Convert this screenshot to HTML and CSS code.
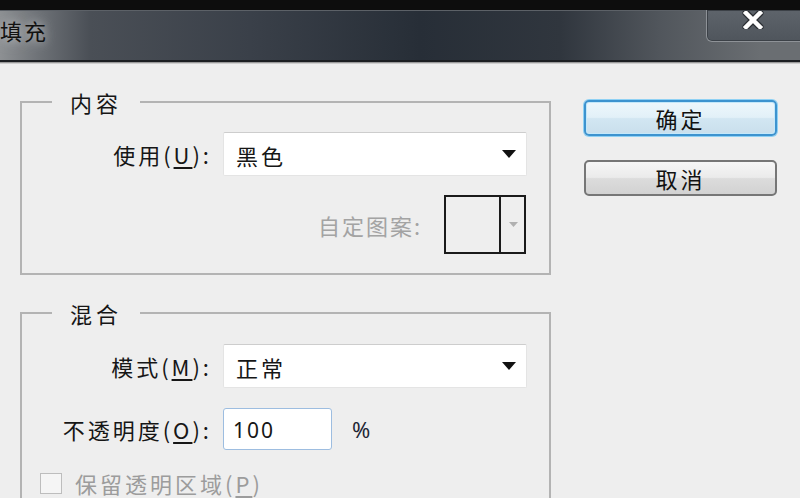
FILE: index.html
```html
<!DOCTYPE html>
<html lang="zh-CN">
<head>
  <meta charset="UTF-8">
  <title>填充</title>
  <link rel="stylesheet" href="styles.css">
</head>
<body>
  <div class="window">
    <div class="topbar"></div>

    <div class="titlebar">
      <span class="title">填充</span>
      <button class="close-btn" type="button" aria-label="关闭">
        <svg width="22" height="18" viewBox="0 0 22 18">
          <path d="M4 2 L18 16 M18 2 L4 16" stroke="#2a2e33" stroke-width="7" stroke-linecap="round"/>
          <path d="M4 2 L18 16 M18 2 L4 16" stroke="#ffffff" stroke-width="4.5" stroke-linecap="square"/>
        </svg>
      </button>
    </div>

    <div class="dialog">
      <div class="groups">
        <fieldset class="group group-content">
          <legend>内容</legend>
          <div class="row">
            <label class="field-label">使用(<u>U</u>):</label>
            <div class="select">
              <span class="select-value">黑色</span>
              <svg class="caret" width="14" height="8" viewBox="0 0 14 8"><path d="M0 0 H14 L7 8 Z" fill="#111"/></svg>
            </div>
          </div>
          <div class="row row-pattern">
            <span class="pattern-label">自定图案:</span>
            <div class="pattern-picker">
              <div class="pattern-swatch"></div>
              <div class="pattern-arrow">
                <svg width="9" height="5" viewBox="0 0 9 5"><path d="M0 0 H9 L4.5 5 Z" fill="#b0b0b0"/></svg>
              </div>
            </div>
          </div>
        </fieldset>

        <fieldset class="group group-blend">
          <legend>混合</legend>
          <div class="row">
            <label class="field-label">模式(<u>M</u>):</label>
            <div class="select">
              <span class="select-value">正常</span>
              <svg class="caret" width="14" height="8" viewBox="0 0 14 8"><path d="M0 0 H14 L7 8 Z" fill="#111"/></svg>
            </div>
          </div>
          <div class="row row-opacity">
            <label class="field-label">不透明度(<u>O</u>):</label>
            <input class="opacity-input" type="text" value="100">
            <span class="unit">%</span>
          </div>
          <div class="row row-check">
            <span class="checkbox"></span>
            <span class="check-label">保留透明区域(<u>P</u>)</span>
          </div>
        </fieldset>
      </div>

      <div class="actions">
        <button class="btn btn-default" type="button">确定</button>
        <button class="btn" type="button">取消</button>
      </div>
    </div>
  </div>
</body>
</html>
```

FILE: styles.css
```css
* {
  box-sizing: border-box;
}

html, body {
  margin: 0;
  width: 800px;
  height: 498px;
  overflow: hidden;
}

body {
  font-family: "Noto Sans CJK SC", "Liberation Sans", sans-serif;
  font-size: 22px;
  letter-spacing: 3px;
  color: #161616;
  background-color: #eeeeee;
}

.topbar {
  height: 10px;
  background-color: #0d0d0d;
}

/* title bar */
.titlebar {
  display: flex;
  justify-content: space-between;
  align-items: flex-start;
  height: 52px;
  border-top: 1px solid #5c6167;
  border-bottom: 2px solid #1c1f22;
  box-shadow: 0 1px 0 #9a9a9a, 0 2px 0 #cfcfcf;
  background: linear-gradient(90deg, #8d9093 0px, #6d7176 40px, #4a4f56 90px, #3a4049 250px, #272e37 420px, #30363e 560px, #51565c 660px, #6a6e72 760px);
}

.title {
  line-height: 38px;
  letter-spacing: 2px;
  color: #111111;
  text-shadow: 0 0 8px #b9bbbd, 0 0 14px #9ea1a4;
}

.close-btn {
  display: flex;
  justify-content: center;
  align-items: flex-start;
  width: 100px;
  height: 32px;
  margin-top: -1px;
  margin-right: -6px;
  padding: 0 6px 0 0;
  border: 1px solid #8e9297;
  border-top: none;
  border-radius: 0 0 6px 6px;
  box-shadow: inset 0 0 0 1px #3c4147;
  background: linear-gradient(180deg, #5e646b, #4f555c);
}

.close-btn svg {
  margin-top: 1px;
}

/* dialog body */
.dialog {
  display: flex;
  align-items: flex-start;
  padding: 0 0 0 20px;
}

.groups {
  width: 531px;
  padding-top: 26px;
}

.group {
  margin: 0;
  min-width: 0;
  padding: 0 22px 19px 20px;
  border: 2px solid #b3b3b3;
}

.group legend {
  margin-left: 10px;
  padding: 0 18px;
  line-height: 28px;
  letter-spacing: 4px;
}

.group-blend {
  margin-top: 24px;
  padding-bottom: 40px;
}

.row {
  display: flex;
  align-items: center;
}

.group-content .row:first-of-type {
  margin-top: 16px;
}

.group-blend .row:first-of-type {
  margin-top: 17px;
}

.field-label {
  width: 170px;
  margin-right: 11px;
  text-align: right;
  white-space: nowrap;
}

.field-label u {
  text-underline-offset: 3px;
}

.select {
  display: flex;
  justify-content: space-between;
  align-items: center;
  width: 304px;
  height: 44px;
  padding: 0 10px 0 12px;
  border: 1px solid #e4e4e4;
  border-top-color: #cdcdcd;
  border-radius: 2px;
  background-color: #ffffff;
}

.select-value {
  padding-top: 2px;
}

.row-pattern {
  justify-content: flex-end;
  margin-top: 19px;
}

.pattern-label {
  margin-right: 22px;
  color: #a3a3a3;
  letter-spacing: 2px;
}

.pattern-picker {
  display: flex;
  width: 82px;
  height: 59px;
  margin-right: 1px;
  border: 2px solid #1a1a1a;
  background-color: #eeeeee;
}

.pattern-swatch {
  width: 55px;
  border-right: 2px solid #1a1a1a;
}

.pattern-arrow {
  display: flex;
  flex: 1;
  justify-content: center;
  align-items: center;
  padding-left: 1px;
}

.row-opacity {
  margin-top: 20px;
}

.opacity-input {
  width: 109px;
  height: 42px;
  padding: 2px 0 0 9px;
  border: 1px solid #9dbde0;
  border-radius: 3px;
  background-color: #ffffff;
  font-family: "Noto Sans", sans-serif;
  font-size: 21px;
  letter-spacing: 2px;
  color: #161616;
  outline: none;
}

.unit {
  margin-left: 20px;
  color: #1e2635;
  font-family: "Noto Sans", sans-serif;
}

.row-check {
  margin-top: 22px;
  margin-left: -2px;
  color: #9c9c9c;
}

.checkbox {
  width: 22px;
  height: 21px;
  margin-right: 13px;
  border: 1px solid #bdbdbd;
  background-color: #f5f5f5;
}

.check-label {
  line-height: 22px;
}

.check-label u {
  text-underline-offset: 3px;
}

/* buttons */
.actions {
  display: flex;
  flex-direction: column;
  gap: 24px;
  width: 193px;
  margin-left: 33px;
  padding-top: 38px;
}

.btn {
  height: 36px;
  padding: 0;
  border: 2px solid #767676;
  border-radius: 5px;
  background: linear-gradient(180deg, #f6f6f6 0%, #ebebeb 48%, #dcdcdc 52%, #d2d2d2 100%);
  font-family: inherit;
  font-size: 22px;
  line-height: 30px;
  letter-spacing: 3px;
  color: #111111;
}

.btn-default {
  border-color: #3d93cf;
  box-shadow: 0 0 0 1px #8fd1f4, inset 0 0 0 1px #c4e8fa;
  background: linear-gradient(180deg, #eef7fc 0%, #e2f0f8 48%, #d2e6f2 52%, #c9dfec 100%);
}
```
